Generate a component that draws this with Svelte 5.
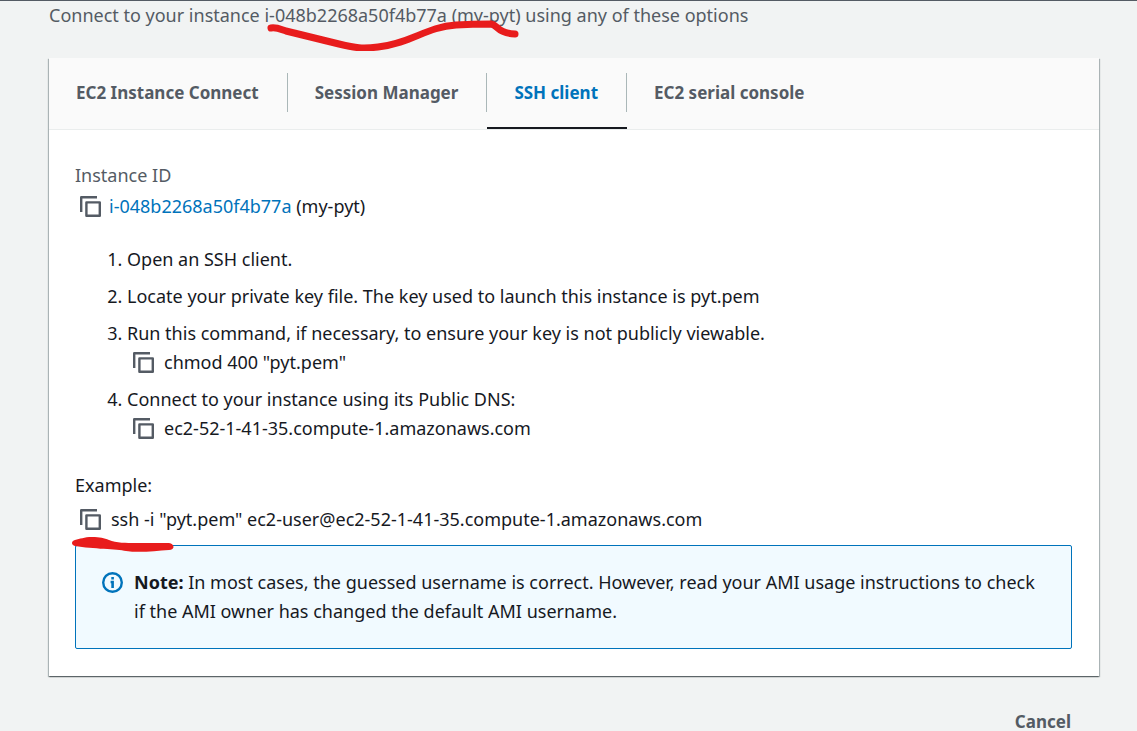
<script>
  const tabs = ['EC2 Instance Connect', 'Session Manager', 'SSH client', 'EC2 serial console'];
  let active = $state('SSH client');
  const instanceId = 'i-048b2268a50f4b77a';
  const host = 'ec2-52-1-41-35.compute-1.amazonaws.com';

  function copy(text) {
    navigator.clipboard?.writeText(text);
  }
</script>

{#snippet copyButton(text)}
  <button class="copy" type="button" aria-label="Copy" onclick={() => copy(text)}>
    <svg width="21" height="21" viewBox="0 0 21 21" fill="none" stroke="currentColor" stroke-width="2.4" stroke-linejoin="round">
      <path d="M1.2 16V1.2H17" />
      <rect x="6.4" y="6.4" width="13.4" height="13.4" />
    </svg>
  </button>
{/snippet}

<main>
  <p class="intro">
    Connect to your instance {instanceId} (my-pyt) using any of these options
    <svg class="mark mark-top" width="254" height="34" viewBox="0 0 254 34" fill="none" stroke="#e81c1c" stroke-width="7" stroke-linecap="round" stroke-linejoin="round" aria-hidden="true">
      <path d="M5 11C10 10 14 12 20 14L73 27C90 31 96 32 112 30C146 26 160 10 190 8C206 7 214 7 225 7C232 8 231 16 249 17" />
    </svg>
  </p>

  <section class="card">
    <div class="tabs" role="tablist">
      {#each tabs as tab}
        <button type="button" role="tab" class="tab" class:active={tab === active} aria-selected={tab === active} onclick={() => (active = tab)}>
          <span>{tab}</span>
        </button>
      {/each}
    </div>

    <div class="body">
      <div class="label">Instance ID</div>
      <div class="row">
        {@render copyButton(instanceId)}
        <span><a href="#instance">{instanceId}</a> (my-pyt)</span>
      </div>

      <ol>
        <li>Open an SSH client.</li>
        <li>Locate your private key file. The key used to launch this instance is pyt.pem</li>
        <li>
          Run this command, if necessary, to ensure your key is not publicly viewable.
          <div class="row code">{@render copyButton('chmod 400 "pyt.pem"')}<span>chmod 400 "pyt.pem"</span></div>
        </li>
        <li>
          Connect to your instance using its Public DNS:
          <div class="row code">{@render copyButton(host)}<span>{host}</span></div>
        </li>
      </ol>

      <div class="example">Example:</div>
      <div class="row command">
        {@render copyButton(`ssh -i "pyt.pem" ec2-user@${host}`)}
        <span>ssh -i "pyt.pem" ec2-user@{host}</span>
      </div>

      <div class="note">
        <svg class="info" width="22" height="22" viewBox="0 0 22 22" fill="none" stroke="#0073bb" aria-hidden="true">
          <circle cx="10.5" cy="10.5" r="9.3" stroke-width="2.4" />
          <path d="M10.6 5v2.6M8.6 10h2v6" stroke-width="2.6" />
        </svg>
        <p><strong>Note:</strong> In most cases, the guessed username is correct. However, read your AMI usage instructions to check if the AMI owner has changed the default AMI username.</p>
        <svg class="mark mark-note" width="104" height="18" viewBox="0 0 104 18" fill="#e81c1c" aria-hidden="true">
          <path d="M4 4C9 3 13 1 21 1C29 1 33 2 38 4C45 7 56 7 64 7H98C104 8 104 14 98 14C84 15 68 17 55 15C46 13 22 13 4 10C0 9 0 5 4 4Z" />
        </svg>
      </div>
    </div>
  </section>

  <footer><button type="button" class="cancel">Cancel</button></footer>
</main>

<style>
  :global(body) {
    margin: 0;
    background: #f1f3f3;
  }
  main {
    padding: 0 38px 0 49px;
    border-top: 1px solid #545b64;
    color: #16191f;
    font: 18px/29px "Noto Sans", "Open Sans", sans-serif;
  }
  p {
    margin: 0;
  }
  button {
    padding: 0;
    border: 0;
    background: none;
    font: inherit;
    color: #545b64;
    cursor: pointer;
  }
  svg {
    display: block;
  }
  .intro {
    position: relative;
    padding-bottom: 28px;
    color: #545b64;
  }
  .mark {
    position: absolute;
    pointer-events: none;
  }
  .mark-top {
    left: 217px;
    top: 16px;
  }
  .card {
    background: #fff;
    box-shadow: 0 1px 1px #00000050, 1px 1px 1px #001c2440, -1px 1px 1px #001c2440;
  }
  .tabs {
    display: flex;
    height: 71px;
    background: #fafafa;
    border-bottom: 1px solid #eaeded;
  }
  .tab {
    display: flex;
    align-items: center;
    font-size: 17px;
    font-weight: 700;
    border-bottom: 2px solid transparent;
  }
  .tab span {
    padding: 5px 28px 5px 27px;
    border-right: 1px solid #aab7b8;
  }
  .tab:last-child span {
    border-right: 0;
  }
  .active {
    color: #0073bb;
    border-bottom-color: #16191f;
  }
  .body {
    padding: 31px 27px 27px 26px;
  }
  .label {
    color: #545b64;
    margin-bottom: 2px;
  }
  .row {
    display: flex;
    align-items: center;
    gap: 8px;
    padding-left: 5px;
  }
  .code,
  .command {
    gap: 10px;
  }
  .code {
    padding-left: 6px;
  }
  a {
    color: #0073bb;
    text-decoration: none;
  }
  ol {
    display: grid;
    gap: 8px;
    margin: 24px 0 28px;
    padding-left: 52px;
  }
  .example {
    margin-bottom: 5px;
  }
  .note {
    position: relative;
    display: flex;
    align-items: flex-start;
    gap: 10px;
    margin-top: 11px;
    padding: 22px 26px;
    border: 1px solid #0073bb;
    border-radius: 2px;
    background: #f1faff;
  }
  .info {
    flex: none;
    margin-top: 4px;
  }
  .mark-note {
    left: -5px;
    top: -10px;
  }
  footer {
    display: flex;
    justify-content: flex-end;
    padding: 31px 28px 0 0;
  }
  .cancel {
    font-size: 17px;
    font-weight: 700;
  }
</style>
